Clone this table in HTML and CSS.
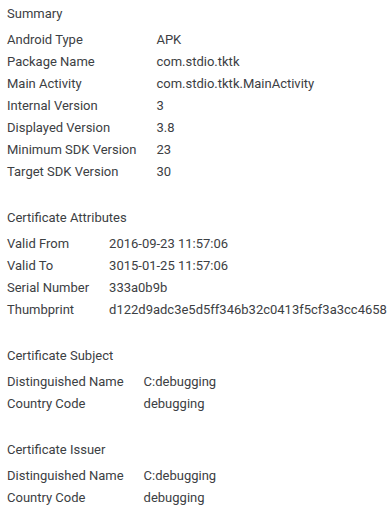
FILE: index.html
```html
<!DOCTYPE html>
<html>
<head>
<meta charset="utf-8">
<link rel="stylesheet" href="styles.css">
</head>
<body>
<section class="sec">
  <h2 class="title">Summary</h2>
  <table class="kv">
    <tr><td>Android Type</td><td>APK</td></tr>
    <tr><td>Package Name</td><td>com.stdio.tktk</td></tr>
    <tr><td>Main Activity</td><td>com.stdio.tktk.MainActivity</td></tr>
    <tr><td>Internal Version</td><td>3</td></tr>
    <tr><td>Displayed Version</td><td>3.8</td></tr>
    <tr><td>Minimum SDK Version</td><td>23</td></tr>
    <tr><td>Target SDK Version</td><td>30</td></tr>
  </table>
</section>
<section class="sec">
  <h2 class="title">Certificate Attributes</h2>
  <table class="kv">
    <tr><td>Valid From</td><td>2016-09-23 11:57:06</td></tr>
    <tr><td>Valid To</td><td>3015-01-25 11:57:06</td></tr>
    <tr><td>Serial Number</td><td>333a0b9b</td></tr>
    <tr><td>Thumbprint</td><td>d122d9adc3e5d5ff346b32c0413f5cf3a3cc4658</td></tr>
  </table>
</section>
<section class="sec">
  <h2 class="title">Certificate Subject</h2>
  <table class="kv">
    <tr><td>Distinguished Name</td><td>C:debugging</td></tr>
    <tr><td>Country Code</td><td>debugging</td></tr>
  </table>
</section>
<section class="sec">
  <h2 class="title">Certificate Issuer</h2>
  <table class="kv">
    <tr><td>Distinguished Name</td><td>C:debugging</td></tr>
    <tr><td>Country Code</td><td>debugging</td></tr>
  </table>
</section>
</body>
</html>
```
FILE: styles.css
```css
html, body {
  margin: 0;
  padding: 0;
  background: #ffffff;
}
body {
  font-family: Roboto, "Liberation Sans", sans-serif;
  font-size: 13px;
  color: #3c4043;
  padding: 3px 7px 0;
  white-space: nowrap;
}
.sec + .sec {
  margin-top: 24px;
}
.title {
  margin: 0 0 4px;
  font-size: 13px;
  font-weight: 400;
  line-height: 22px;
  color: #3c4043;
}
.kv {
  border-collapse: collapse;
}
.kv td {
  padding: 0 20px 0 0;
  line-height: 22px;
  height: 22px;
  vertical-align: middle;
}
.kv td:last-child {
  padding-right: 0;
}
```
